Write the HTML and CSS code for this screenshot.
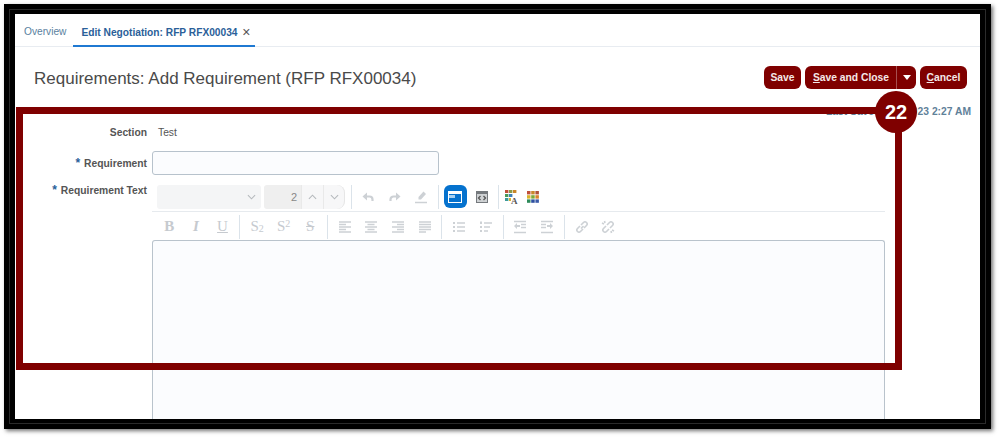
FILE: index.html
```html
<!DOCTYPE html>
<html lang="en">
<head>
<meta charset="utf-8">
<title>Requirements: Add Requirement</title>
<link rel="stylesheet" href="styles.css">
</head>
<body>
<div class="frame">
  <div class="screen">
    <nav class="tabs">
      <a class="tab">Overview</a>
      <a class="tab tab-active">Edit Negotiation: RFP RFX00034 <span class="tab-close">×</span></a>
    </nav>
    <header class="page-head">
      <h1 class="page-title">Requirements: Add Requirement (RFP RFX00034)</h1>
      <div class="actions">
        <button class="btn btn-save">Save</button>
        <div class="btn-split">
          <button class="btn btn-main"><u>S</u>ave and Close</button>
          <button class="btn btn-caret"><span class="caret"></span></button>
        </div>
        <button class="btn btn-cancel"><u>C</u>ancel</button>
      </div>
    </header>
    <p class="saved">Last Saved 8/31/2023 2:27 AM</p>
    <form class="form">
      <div class="label label-section">Section</div>
      <div class="value">Test</div>
      <div class="label label-req"><span class="star">*</span> Requirement</div>
      <div class="input-cell"><div class="input"></div></div>
      <div class="label label-text"><span class="star">*</span> Requirement Text</div>
      <div class="editor-cell">
        <div class="toolbar tb1">
          <div class="sel"><svg class="chev" viewBox="0 0 10 6"><path d="M1 1l4 4 4-4"/></svg></div>
          <div class="num"><span class="num-val">2</span><span class="spin"><svg class="chev" viewBox="0 0 10 6"><path d="M1 5l4-4 4 4"/></svg></span><span class="spin spin-last"><svg class="chev" viewBox="0 0 10 6"><path d="M1 1l4 4 4-4"/></svg></span></div>
          <span class="sep sep-first"></span>
          <span class="tb"><svg class="ico" viewBox="0 0 14 14"><path class="st st-h" d="M4.500 6.500h4a3 3 0 0 1 3 3v1.500"/><path class="fl" d="M1.500 6.500L6 2.500v8z"/></svg></span>
          <span class="tb"><svg class="ico" viewBox="0 0 14 14"><path class="st st-h" d="M9.500 6.500h-4a3 3 0 0 0-3 3v1.500"/><path class="fl" d="M12.500 6.500L8 2.500v8z"/></svg></span>
          <span class="tb"><svg class="ico" viewBox="0 0 14 14"><path class="fl" d="M9.500 1.500l2.500 2.500-5 5.500H4.500V7z"/><path class="st" d="M1 12.500h12"/></svg></span>
          <span class="sep"></span>
          <span class="tb-on"><svg class="ico-on" viewBox="0 0 14 14"><path fill="#fff" d="M0 1h14v12H0z"/><path fill="#0572ce" d="M1 4h12v8H1z"/><path fill="#a9d0f0" d="M1 5h6v3H1z"/></svg></span>
          <span class="tb"><svg class="ico-dark" viewBox="0 0 14 14"><path fill="#75797d" d="M1 1h12v12H1z"/><path fill="#cfd2d4" d="M2 4h10v8H2z"/><path fill="none" stroke="#555" stroke-width="1.300" d="M5.500 6L3.500 8l2 2M8.500 6l2 2-2 2"/></svg></span>
          <span class="sep sep-last"></span>
          <span class="tb tb-color"><svg class="ico-color" viewBox="0 0 14 14"><path fill="#c0503b" d="M0 0h3.400v3H0z"/><path fill="#8a9a4a" d="M4 0h3.400v3H4z"/><path fill="#c9862a" d="M8 0h3.400v3H8z"/><path fill="#4a9a5a" d="M0 4h3.400v3H0z"/><path fill="#3d7fb8" d="M4 4h3.400v3H4z"/><path fill="#3d9a9a" d="M0 8h3.400v3H0z"/><path fill="#d9b32a" d="M4 8h2v3H4z"/><text x="6" y="13.500" class="ico-a">A</text></svg></span>
          <span class="tb tb-color"><svg class="ico-color" viewBox="0 0 14 14"><path fill="#c0503b" d="M1 1h3.500v3.400H1z"/><path fill="#c9862a" d="M5.200 1h3.500v3.400H5.200z"/><path fill="#b0503b" d="M9.400 1h3.500v3.400H9.400z"/><path fill="#d9b32a" d="M1 5.200h3.500v3.400H1z"/><path fill="#7aa83a" d="M5.200 5.200h3.500v3.400H5.200z"/><path fill="#d9832a" d="M9.400 5.200h3.500v3.400H9.400z"/><path fill="#2d8a5a" d="M1 9.400h3.500v3.400H1z"/><path fill="#2d4fa0" d="M5.200 9.400h3.500v3.400H5.200z"/><path fill="#3a5aa8" d="M9.400 9.400h3.500v3.400H9.400z"/></svg></span>
        </div>
        <div class="toolbar tb2">
          <span class="tb tx tx-b">B</span>
          <span class="tb tx tx-i">I</span>
          <span class="tb tx tx-u">U</span>
          <span class="sep"></span>
          <span class="tb tx"><span>S<sub>2</sub></span></span>
          <span class="tb tx"><span>S<sup>2</sup></span></span>
          <span class="tb tx tx-s">S</span>
          <span class="sep"></span>
          <span class="tb"><svg class="ico" viewBox="0 0 14 14"><path class="st" d="M1 2h12M1 4.500h7M1 7h12M1 9.500h7M1 12h12"/></svg></span>
          <span class="tb"><svg class="ico" viewBox="0 0 14 14"><path class="st" d="M1 2h12M3.500 4.500h7M1 7h12M3.500 9.500h7M1 12h12"/></svg></span>
          <span class="tb"><svg class="ico" viewBox="0 0 14 14"><path class="st" d="M1 2h12M6 4.500h7M1 7h12M6 9.500h7M1 12h12"/></svg></span>
          <span class="tb"><svg class="ico" viewBox="0 0 14 14"><path class="st" d="M1 2h12M1 4.500h12M1 7h12M1 9.500h12M1 12h7"/></svg></span>
          <span class="sep"></span>
          <span class="tb"><svg class="ico" viewBox="0 0 14 14"><path class="fl" d="M1 2h2v2H1zM1 6h2v2H1zM1 10h2v2H1z"/><path class="st" d="M5 3h8M5 7h8M5 11h8"/></svg></span>
          <span class="tb"><svg class="ico" viewBox="0 0 14 14"><path class="fl" d="M1 1.500h2v2.500H1zM1 6h2v2H1zM1 10h2v2H1z"/><path class="st" d="M5 3h8M5 7h6M5 11h4"/></svg></span>
          <span class="sep"></span>
          <span class="tb"><svg class="ico" viewBox="0 0 14 14"><path class="st" d="M1 1.500h12M8 4.500h5M8 7.500h5M1 12.500h12"/><path class="fl" d="M1 6l3-3v2h3v2H4v2z"/></svg></span>
          <span class="tb"><svg class="ico" viewBox="0 0 14 14"><path class="st" d="M1 1.500h12M1 4.500h5M1 7.500h5M1 12.500h12"/><path class="fl" d="M13 6l-3-3v2H7v2h3v2z"/></svg></span>
          <span class="sep"></span>
          <span class="tb"><svg class="ico" viewBox="0 0 14 14"><path class="st st-b" d="M6 8.500l2.500-2.500M5 6L2.500 8.500a2 2 0 0 0 3 3L8 9M6 5l2.500-2.500a2 2 0 0 1 3 3L9 8"/></svg></span>
          <span class="tb"><svg class="ico" viewBox="0 0 14 14"><path class="st st-b" d="M5 6L2.500 8.500a2 2 0 0 0 3 3L8 9M6 5l2.500-2.500a2 2 0 0 1 3 3L9 8M1 3l2 1M3.500 1l.5 2M13 11l-2-1M10.500 13l-.5-2"/></svg></span>
        </div>
        <div class="editor-area"></div>
      </div>
    </form>
  </div>
  <div class="callout"></div>
  <div class="badge">22</div>
</div>
</body>
</html>
```
FILE: styles.css
```css
* { box-sizing: border-box; }
html, body { margin: 0; padding: 0; background: #fff; height: 442px; overflow: hidden; }
body { font-family: "Liberation Sans", Arial, sans-serif; padding: 4px 0 0 4px; }

.frame {
  position: relative;
  width: 987px;
  height: 425px;
  background: #000;
  border: 5px solid #000;
  padding: 5px 6px;
  box-shadow: inset 0 0 0 1px #2b2b2b, 2px 2px 4px rgba(0, 0, 0, .55);
}
.screen {
  width: 965px;
  height: 405px;
  background: #fff;
  overflow: hidden;
  display: flex;
  flex-direction: column;
}

.tabs {
  flex: none;
  height: 33px;
  display: flex;
  align-items: stretch;
  border-bottom: 1px solid #e8ecf1;
  padding-left: 9px;
  font-size: 10.2px;
}
.tab { color: #5a7fa0; line-height: 36px; margin-right: 7px; }
.tab-active {
  width: 182px;
  padding-left: 8px;
  color: #2a6099;
  font-weight: 700;
  border-bottom: 2px solid #1f79d2;
  height: 33px;
  white-space: nowrap;
}
.tab-close { color: #555; font-size: 14px; font-weight: 400; margin-left: 2px; vertical-align: -1px; }

.page-head {
  flex: none;
  height: 56px;
  display: flex;
  align-items: flex-start;
  justify-content: space-between;
  padding: 19px 13px 0 19px;
}
.page-title { margin: 1px 0 0; font-size: 17px; font-weight: 400; color: #4a4a4a; line-height: 24px; white-space: nowrap; }
.actions { display: flex; gap: 4px; }
.btn {
  height: 23px;
  padding: 0;
  border: 0;
  border-radius: 6px;
  background: #7f0000;
  color: #f4e8e8;
  font: 700 10.3px "Liberation Sans", Arial, sans-serif;
  white-space: nowrap;
}
.btn-save { width: 37px; }
.btn-cancel { width: 47px; }
.btn-split { display: flex; }
.btn-main { width: 92px; padding: 0 0 0 1px; border-radius: 6px 0 0 6px; border-right: 1px solid #a65050; }
.btn-caret { width: 19px; padding: 0; border-radius: 0 6px 6px 0; display: flex; align-items: center; justify-content: center; }
.caret { width: 0; height: 0; border: 4px solid transparent; border-top: 5px solid #fff; border-bottom: 0; }

.saved {
  flex: none;
  margin: 0;
  height: 16px;
  padding: 2px 9px 0 0;
  text-align: right;
  font-size: 10.3px;
  font-weight: 700;
  line-height: 14px;
  color: #5f8199;
}

.form {
  flex: 1;
  display: grid;
  grid-template-columns: 132px 1fr;
  grid-template-rows: 30px 41px 1fr;
  min-height: 0;
}
.label { font-size: 10.3px; font-weight: 700; color: #555; text-align: right; white-space: nowrap; }
.label-section { line-height: 12px; padding-top: 8px; }
.label-req { line-height: 14px; padding-top: 7px; }
.label-text { line-height: 14px; padding-top: 0; margin-top: -7px; }
.star { color: #2a6099; font-size: 12px; margin-right: 1px; }
.value { font-size: 10.3px; color: #555; padding: 8px 0 0 11px; line-height: 12px; }
.input-cell { padding: 2px 0 0 5px; }
.input { width: 287px; height: 24px; background: #fbfcfe; border: 1px solid #b7c2cc; border-radius: 3px; }

.editor-cell { padding: 0 0 0 5px; min-height: 0; display: flex; flex-direction: column; margin-top: -5px; }
.toolbar { display: flex; align-items: center; flex: none; width: 733px; }
.tb1 { padding: 0 0 3px 5px; border-bottom: 1px solid #e6eaee; height: 27px; }
.tb2 { height: 28px; padding: 1px 0 0 4px; }
.tb2 .sep { margin: 0 3.5px; }
.sel { width: 104px; height: 24px; background: #f4f5f6; border-radius: 3px; display: flex; align-items: center; justify-content: flex-end; padding-right: 2px; }
.num { width: 81px; height: 24px; margin-left: 3px; background: #efefef; border-radius: 3px 8px 8px 3px; display: flex; align-items: center; }
.num-val { width: 37px; padding-right: 4px; text-align: right; font-size: 11px; color: #888; }
.spin { width: 22px; height: 24px; background: #f7f7f8; border-left: 1px solid #e9e9e9; display: flex; align-items: center; justify-content: center; }
.spin-last { border-radius: 0 8px 8px 0; border-right: 1px solid #e6e6e6; }
.chev { width: 9px; height: 6px; fill: none; stroke: #b5b9bd; stroke-width: 1.2; margin: 0 3px; }
.sep { flex: none; width: 1px; height: 24px; background: #dbe3ea; margin: 0 3px; }
.sep-first { margin-left: 6px; }
.sep-last { margin-right: 2px; }
.tb { flex: none; width: 26.6px; height: 24px; display: flex; align-items: center; justify-content: center; }
.tb-color { width: 21px; }
.tb-on { flex: none; width: 23px; height: 23px; margin: 0 2px; background: #0572ce; border-radius: 6px; display: flex; align-items: center; justify-content: center; }
.ico { width: 14px; height: 14px; }
.ico-on { width: 14px; height: 14px; }
.ico-dark { width: 14px; height: 14px; }
.ico-color { width: 14px; height: 14px; }
.ico-a { font: 700 9px "Liberation Serif", serif; fill: #555; }
.st { fill: none; stroke: #cdd1d5; stroke-width: 1.5; }
.st-b { stroke-width: 1.6; }
.st-h { stroke-width: 2.2; }
.fl { fill: #cdd1d5; }
.tx { font: 400 15px "Liberation Serif", serif; color: #c6cacf; }
.tx sub, .tx sup { font-size: 10px; line-height: 0; }
.tx sub { vertical-align: -1px; }
.tx sup { vertical-align: 4px; }
.tx-b { font-weight: 700; }
.tx-i { font-style: italic; font-weight: 700; }
.tx-u { text-decoration: underline; }
.tx-s { text-decoration: line-through; }
.editor-area { flex: 1; width: 733px; background: #fbfcfe; border: 1px solid #b9c3cc; border-bottom: 0; border-radius: 3px 3px 0 0; }

.callout {
  position: absolute;
  left: 7px;
  top: 98px;
  width: 886px;
  height: 263px;
  border: 7px solid #7f0000;
}
.badge {
  position: absolute;
  left: 866px;
  top: 82px;
  width: 42px;
  height: 42px;
  border-radius: 50%;
  background: #7f0000;
  color: #fff;
  font-size: 20px;
  font-weight: 700;
  line-height: 42px;
  text-align: center;
}
```
